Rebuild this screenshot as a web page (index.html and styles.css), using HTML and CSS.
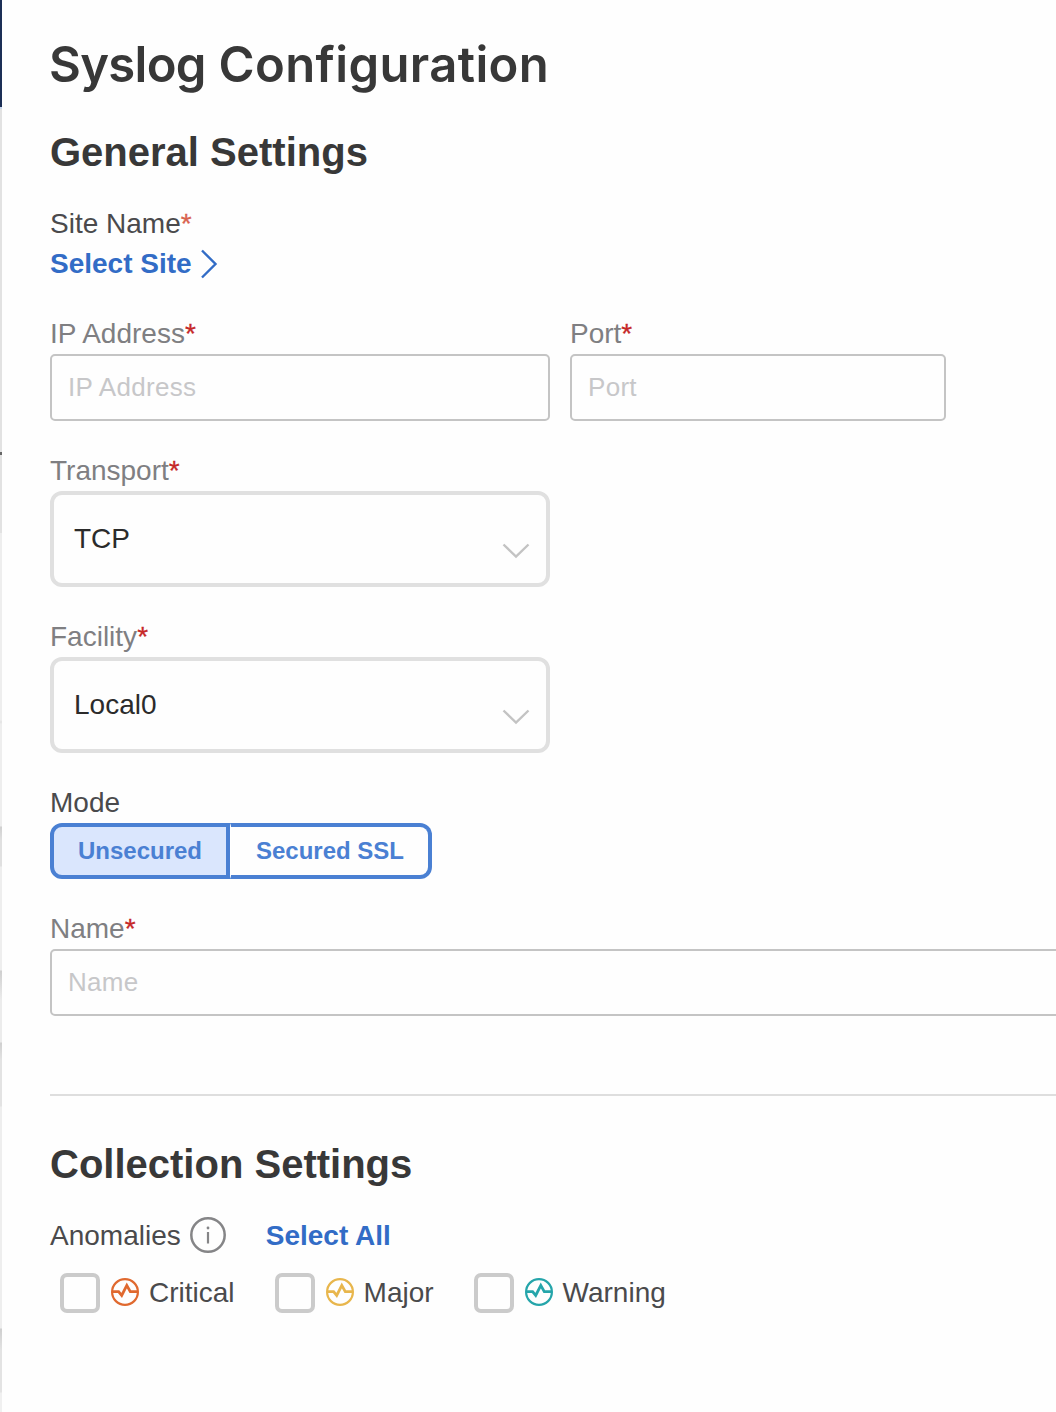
FILE: index.html
```html
<!DOCTYPE html>
<html lang="en">
<head>
<meta charset="utf-8">
<title>Syslog Configuration</title>
<link rel="stylesheet" href="styles.css">
</head>
<body>
<svg width="0" height="0" class="defs">
  <symbol id="pulse" viewBox="0 0 28 28">
    <circle cx="14" cy="14" r="12.9" fill="none" stroke="currentColor" stroke-width="2.2"/>
    <path d="M1.5 13.7H7.6L10.7 17.4L15.8 7.4L19.3 13.7H26.5" fill="none" stroke="currentColor" stroke-width="2.8"/>
  </symbol>
  <symbol id="down" viewBox="0 0 28 16">
    <path d="M1.5 1.5L14 13.5L26.5 1.5" fill="none" stroke="currentColor" stroke-width="2.4"/>
  </symbol>
</svg>
<div class="page">
  <div class="edge"></div>
  <main class="panel">
    <h1 class="title"><span class="tight">Syslog</span> Configuration</h1>
    <h2 class="heading">General Settings</h2>
    <div class="site">
      <div class="label dark">Site Name<span class="req soft">*</span></div>
      <a class="link">Select Site
        <svg class="chevron" width="18" height="30" viewBox="0 0 18 30"><path d="M2 1.5L15.5 15L2 28.5" fill="none" stroke="currentColor" stroke-width="2.4"/></svg>
      </a>
    </div>
    <form class="fields">
      <div class="row">
        <div class="field ip">
          <label class="label">IP Address<span class="req">*</span></label>
          <input class="input" placeholder="IP Address">
        </div>
        <div class="field port">
          <label class="label">Port<span class="req">*</span></label>
          <input class="input" placeholder="Port">
        </div>
      </div>
      <div class="field">
        <label class="label">Transport<span class="req">*</span></label>
        <div class="select"><span>TCP</span><svg class="down" width="28" height="16"><use href="#down"/></svg></div>
      </div>
      <div class="field">
        <label class="label">Facility<span class="req">*</span></label>
        <div class="select"><span>Local0</span><svg class="down" width="28" height="16"><use href="#down"/></svg></div>
      </div>
      <div class="field">
        <label class="label dark">Mode</label>
        <div class="toggle"><div class="option active">Unsecured</div><div class="option last">Secured SSL</div></div>
      </div>
      <div class="field name">
        <label class="label">Name<span class="req">*</span></label>
        <input class="input" placeholder="Name">
      </div>
    </form>
    <div class="divider"></div>
    <h2 class="heading">Collection Settings</h2>
    <div class="anomalies">
      <span class="dark">Anomalies</span>
      <svg class="info" width="36" height="36" viewBox="0 0 36 36"><circle cx="18" cy="18" r="16.7" fill="none" stroke="currentColor" stroke-width="2.5"/><path d="M18 15V26.5" stroke="currentColor" stroke-width="2.2"/><circle cx="18" cy="11" r="1.4" fill="currentColor"/></svg>
      <a class="link">Select All</a>
    </div>
    <div class="checks">
      <div class="check"><span class="box"></span><svg class="pulse critical" width="28" height="28"><use href="#pulse"/></svg><span>Critical</span></div>
      <div class="check"><span class="box"></span><svg class="pulse major" width="28" height="28"><use href="#pulse"/></svg><span>Major</span></div>
      <div class="check"><span class="box"></span><svg class="pulse warning" width="28" height="28"><use href="#pulse"/></svg><span>Warning</span></div>
    </div>
  </main>
</div>
</body>
</html>
```

FILE: styles.css
```css
* { box-sizing: border-box; }
body { margin: 0; background: #fefefe; color: #4a4a4c; font: 28px/40px "Liberation Sans", Arial, sans-serif; overflow: hidden; }
.defs { display: none; }
.page { display: flex; height: 1412px; overflow: hidden; }
/* sliver of the page that sits behind the panel */
.edge {
  flex: 0 0 2px;
  background: linear-gradient(#1c2f56 0 107px, #c9d8ee 107px 109px, #e2e2e2 109px 452px, #666 452px 455px, #e2e2e2 455px 533px, #eee 533px 720px, #e3e3e3 722px, #eee 724px 826px, #d0d0d0 827px, #e0e0e0 840px 866px, #eee 867px 970px, #cfcfcf 971px, #ececec 1000px 1042px, #d0d0d0 1043px, #e3e3e3 1060px 1106px, #eee 1107px 1328px, #cfcfcf 1329px, #e3e3e3 1350px 1392px, #f0f0f0 1393px);
}
.panel { flex: 1; min-width: 0; padding: 35px 0 0 48px; }
.title { margin: 0 0 0 -1px; font: 620 49px/60px Inter, sans-serif; letter-spacing: 0.38px; color: #383838; white-space: nowrap; }
.tight { letter-spacing: -0.7px; }
.heading { margin: 0; font-size: 40px; line-height: 50px; font-weight: 700; color: #383838; }
.title + .heading { margin-top: 32px; }
.site { padding-top: 27px; }
.label { display: block; height: 40px; color: #7f7f82; white-space: nowrap; }
.dark { color: #4a4a4c; }
.req { color: #c62828; -webkit-text-stroke: 0.3px currentColor; }
.soft { color: #d9634f; }
.link { display: flex; align-items: center; gap: 8px; color: #326cc6; font-weight: 700; }
.chevron { margin-top: -1px; }
.fields { display: flex; flex-direction: column; gap: 30px; margin: 30px 0 0; }
.row { display: flex; gap: 20px; }
.field { width: 500px; }
.field.port { width: 376px; }
.field.name { width: 1040px; }
.input { display: block; width: 100%; height: 67px; margin: 0; padding: 0 16px; border: 2px solid #c4c4c4; border-radius: 5px; background: #fefefe; font: 26px "Liberation Sans", Arial, sans-serif; letter-spacing: 0.3px; outline: 0; }
.input::placeholder { color: #c7c7c9; opacity: 1; }
.select { display: flex; align-items: center; justify-content: space-between; height: 96px; padding: 0 16px 0 20px; border: 4px solid #e0e0e0; border-radius: 12px; color: #2b2b2b; }
.down { color: #c3c3c3; margin-top: 23px; }
.toggle { display: flex; width: 382px; height: 56px; font-size: 24px; line-height: 48px; font-weight: 700; color: #4a80d3; text-align: center; }
.option { border: 4px solid #4a80d3; }
.active { width: 180px; background: #dae6fd; border-radius: 12px 0 0 12px; }
.last { width: 202px; border-left: 1px solid #fff; border-radius: 0 12px 12px 0; padding-left: 1px; }
.divider { height: 2px; margin: 78px 0 43px; background: #dedede; }
.anomalies { display: flex; align-items: center; height: 40px; margin-top: 27px; }
.info { margin: -2px 40px 0 9px; color: #858587; }
.checks { display: flex; gap: 40px; padding: 17px 0 0 10px; }
.check { display: flex; align-items: center; height: 40px; }
.box { width: 40px; height: 40px; border: 4px solid #cbcbcb; border-radius: 7px; margin-right: 11px; }
.pulse { margin: -2px 10px 0 0; }
.critical { color: #e0692f; }
.major { color: #e8b64c; }
.warning { color: #25a5aa; }
```
